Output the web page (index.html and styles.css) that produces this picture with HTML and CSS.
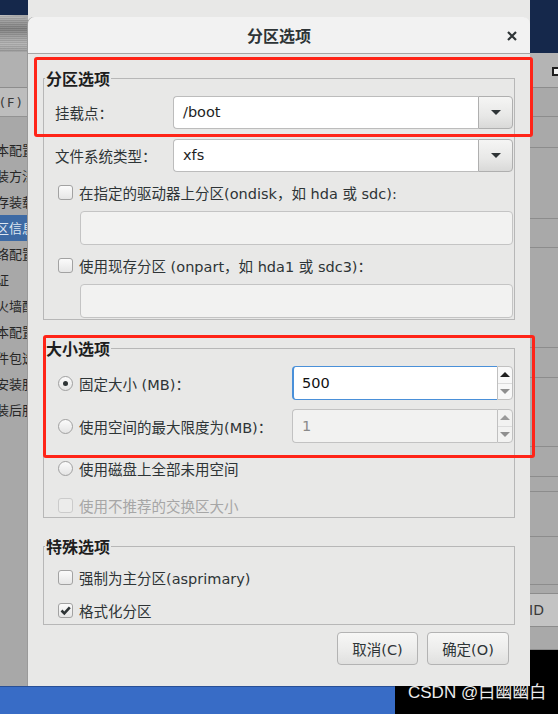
FILE: index.html
```html
<!DOCTYPE html>
<html lang="zh-CN">
<head>
<meta charset="utf-8">
<title>分区选项</title>
<link rel="stylesheet" href="styles.css">
</head>
<body>
<div class="desktop">
  <div class="bg-row">
    <div class="leftwin">
      <div class="navy-top"></div>
      <div class="disk"></div>
      <div class="toolbar"></div>
      <div class="menu">(F)</div>
      <div class="list">
        <div class="item">本配置</div>
        <div class="item">装方法</div>
        <div class="item">存装载</div>
        <div class="item sel">区信息</div>
        <div class="item">络配置</div>
        <div class="item">证</div>
        <div class="item">火墙配</div>
        <div class="item">本配置</div>
        <div class="item">件包选</div>
        <div class="item">安装服</div>
        <div class="item">装后服</div>
      </div>
    </div>
    <div class="mid"></div>
    <div class="rightwin">
      <div class="rw navy"></div>
      <div class="rw head" style="height:35px"><span class="sq"></span></div>
      <div class="rw" style="height:29px"></div>
      <div class="rw" style="height:31px"></div>
      <div class="rw" style="height:71px"></div>
      <div class="rw" style="height:29px"></div>
      <div class="rw" style="height:100px"></div>
      <div class="rw" style="height:30px"></div>
      <div class="rw" style="height:69px"></div>
      <div class="rw" style="height:30px"></div>
      <div class="rw" style="height:15px"></div>
      <div class="rw" style="height:45px"></div>
      <div class="rw" style="height:48px"></div>
      <div class="rw" style="height:9px"></div>
      <div class="rw idrow" style="height:33px">ID</div>
      <div class="rw" style="height:23px"></div>
      <div class="rw black" style="height:36px"></div>
    </div>
  </div>
  <div class="taskbar">
    <div class="tb-blue"></div>
    <div class="tb-black"></div>
  </div>

  <div class="watermark">CSDN @白幽幽白</div>

  <div class="dialog">
    <div class="titlebar">
      <span class="title">分区选项</span>
      <span class="close"><svg width="10" height="10" viewBox="0 0 10 10"><path d="M1 1 L9 9 M9 1 L1 9" stroke="#2e3436" stroke-width="2.2" fill="none"/></svg></span>
    </div>
    <div class="dbody">
      <fieldset class="frame f1">
        <legend>分区选项</legend>
        <div class="grid2">
          <span class="lbl">挂载点：</span>
          <div class="combo"><span class="cval">/boot</span><span class="drop"><i class="tri-down"></i></span></div>
          <span class="lbl">文件系统类型：</span>
          <div class="combo"><span class="cval">xfs</span><span class="drop"><i class="tri-down"></i></span></div>
        </div>
        <div class="row r-a"><span class="cb"></span><span>在指定的驱动器上分区(ondisk，如 hda 或 sdc):</span></div>
        <div class="entry"></div>
        <div class="row r-a"><span class="cb"></span><span>使用现存分区 (onpart，如 hda1 或 sdc3)：</span></div>
        <div class="entry"></div>
      </fieldset>

      <fieldset class="frame f2">
        <legend>大小选项</legend>
        <div class="srow">
          <span class="rd on"></span><span class="stext">固定大小 (MB)：</span>
          <div class="spin">
            <div class="spin-entry focus">500</div>
            <div class="spin-btns"><span><i class="tri-up"></i></span><span><i class="tri-down grey"></i></span></div>
          </div>
        </div>
        <div class="srow s2">
          <span class="rd"></span><span class="stext">使用空间的最大限度为(MB)：</span>
          <div class="spin dis">
            <div class="spin-entry">1</div>
            <div class="spin-btns"><span><i class="tri-up grey"></i></span><span><i class="tri-down grey"></i></span></div>
          </div>
        </div>
        <div class="row r-b"><span class="rd"></span><span>使用磁盘上全部未用空间</span></div>
        <div class="row r-b disabled"><span class="cb dis"></span><span>使用不推荐的交换区大小</span></div>
      </fieldset>

      <fieldset class="frame f3">
        <legend>特殊选项</legend>
        <div class="row"><span class="cb"></span><span>强制为主分区(asprimary)</span></div>
        <div class="row r-c"><span class="cb"><svg width="15" height="15" viewBox="0 0 15 15"><path d="M3.5 7.5 L6.3 10.3 L11.8 4.3" stroke="#2e3436" stroke-width="2.6" fill="none"/></svg></span><span>格式化分区</span></div>
      </fieldset>

      <div class="buttons">
        <button class="btn b1">取消(C)</button>
        <button class="btn b2">确定(O)</button>
      </div>
    </div>
    <div class="mark m1"></div>
    <div class="mark m2"></div>
  </div>
</div>
</body>
</html>
```

FILE: styles.css
```css
* { box-sizing: border-box; }
html, body { margin: 0; padding: 0; }
body {
  width: 558px;
  height: 714px;
  overflow: hidden;
  background: #15284b;
  font-family: "DejaVu Sans", "Noto Sans CJK SC", sans-serif;
  font-size: 14.5px;
  color: #2e3436;
}
.desktop {
  position: relative;
  width: 558px;
  height: 714px;
  display: flex;
  flex-direction: column;
}
.bg-row { height: 686px; display: flex; }

/* left background window */
.leftwin {
  width: 28px;
  display: flex;
  flex-direction: column;
  background: #a8a8a8;
  overflow: hidden;
}
.navy-top { height: 15px; background: #15284b; }
.disk {
  height: 37px;
  border-top-right-radius: 30px 6px;
  background:
    repeating-linear-gradient(180deg, rgba(255,255,255,0.08) 0 1px, rgba(0,0,0,0.07) 1px 2px),
    linear-gradient(180deg, #bdbdbd 0%, #9a9a9a 16%, #7e7e7e 38%, #9c9c9c 58%, #b2b2b2 78%, #9a9a9a 100%);
}
.toolbar { height: 36px; background: #b1b1b1; border-bottom: 1px solid #8d8d8d; }
.menu {
  height: 29px;
  background: #bdbdbd;
  border-bottom: 1px solid #929292;
  line-height: 30px;
  letter-spacing: 2px;
  font-size: 13px;
  color: #3a3a3a;
  white-space: nowrap;
}
.list { padding-top: 20px; }
.item {
  height: 26px;
  line-height: 26px;
  white-space: nowrap;
  margin-left: -4px;
  color: #262626;
  font-family: "Noto Sans CJK SC", sans-serif;
  font-size: 13px;
}
.item.sel { background: #3d6aa4; color: #dde6f1; }
.mid { flex: 1; background: #e8e8e7; }

/* right background window */
.rightwin { width: 28px; display: flex; flex-direction: column; background: #a9a9a9; }
.rw { border-bottom: 1px solid #8c8c8c; flex: none; }
.rw.navy { height: 53px; background: #15284b; border-bottom: 0; }
.rw.head { background: #b4b4b4; }
.sq {
  display: block;
  margin: 14px 0 0 22px;
  width: 9px;
  height: 9px;
  border: 2px solid #1e1e1e;
  background: #f2f2f2;
}
.rw.idrow {
  background: #c3c3c3;
  line-height: 32px;
  color: #3a3a3a;
  font-size: 14px;
  white-space: nowrap;
  margin-left: -1px;
}
.rw.black { background: #000; border-bottom: 0; }

/* taskbar */
.taskbar { height: 28px; display: flex; }
.tb-blue { width: 395px; background: #386cc6; border-top: 1px solid #284f96; }
.tb-black { flex: 1; background: #000; }
.watermark {
  position: absolute;
  left: 408px;
  top: 683px;
  color: #ececec;
  font-family: "Liberation Sans", "Noto Sans CJK SC", sans-serif;
  font-size: 17px;
  line-height: 20px;
  white-space: nowrap;
}

/* dialog */
.dialog {
  position: absolute;
  left: 28px;
  top: 17px;
  width: 502px;
  height: 669px;
  background: #e8e8e7;
  border-radius: 7px 7px 0 0;
  box-shadow: -1px 0 0 #9a9a9a;
}
.titlebar {
  position: relative;
  height: 37px;
  background: #f2f2f2;
  border-radius: 7px 7px 0 0;
  border-bottom: 1px solid #a6a6a6;
  display: flex;
  align-items: center;
  justify-content: center;
}
.title {
  font-family: "Noto Sans CJK SC", sans-serif;
  font-size: 16px;
  font-weight: bold;
  color: #2e3436;
  line-height: 20px;
}
.close {
  position: absolute;
  right: 13px;
  top: 14px;
  width: 10px;
  height: 10px;
  display: flex;
}
.dbody { padding: 15px 15px 21px 15px; }

.frame {
  margin: 0;
  border: 1px solid #b7b7b7;
  padding: 9px 1px 0 11px;
  min-width: 0;
}
.frame legend {
  font-family: "Noto Sans CJK SC", sans-serif;
  font-weight: bold;
  font-size: 16px;
  line-height: 18px;
  padding: 0 1px;
  margin-left: -10px;
  color: #1e1e1e;
}
.f1 { padding-bottom: 1px; }
.f2 { margin-top: 19px; }
.f3 { margin-top: 19px; padding-top: 10px; padding-bottom: 2px; }

.grid2 {
  display: grid;
  grid-template-columns: 118px 1fr;
  row-gap: 10px;
  align-items: center;
}
.lbl { line-height: 33px; font-family: "Noto Sans CJK SC", sans-serif; }
.combo { display: flex; height: 33px; }
.cval {
  flex: 1;
  background: #fff;
  border: 1px solid #bcbcbc;
  border-right: 0;
  border-radius: 4px 0 0 4px;
  padding-left: 9px;
  line-height: 31px;
  color: #1e1e1e;
}
.drop {
  width: 35px;
  border: 1px solid #afafaf;
  border-radius: 0 4px 4px 0;
  background: linear-gradient(180deg, #f5f5f4 0%, #e8e8e7 60%, #d9d9d8 100%);
  display: flex;
  align-items: center;
  justify-content: center;
}
.tri-down {
  display: block;
  width: 0; height: 0;
  border-left: 5px solid transparent;
  border-right: 5px solid transparent;
  border-top: 5px solid #2e3436;
}
.tri-up {
  display: block;
  width: 0; height: 0;
  border-left: 5px solid transparent;
  border-right: 5px solid transparent;
  border-bottom: 5px solid #1e1e1e;
}
.tri-down.grey { border-top-color: #8f8f8f; }
.tri-up.grey { border-bottom-color: #9a9a9a; }

.row {
  display: flex;
  align-items: center;
  height: 24px;
  gap: 6px;
  padding-left: 3px;
  white-space: nowrap;
}
.r-a { margin-top: 8px; }
.r-b { margin-top: 13px; }
.r-c { margin-top: 9px; }
.row.disabled { color: #a6a6a6; }

.cb {
  width: 15px;
  height: 15px;
  flex: none;
  border: 1px solid #a2a2a2;
  border-radius: 3px;
  background: linear-gradient(180deg, #fbfbfb, #e6e6e6);
  display: flex;
  align-items: center;
  justify-content: center;
}
.cb svg { display: block; margin: -1px; }
.cb.dis { border-color: #cbcbcb; background: #ececeb; }

.rd {
  width: 15px;
  height: 15px;
  flex: none;
  border: 1px solid #a0a0a0;
  border-radius: 50%;
  background: linear-gradient(180deg, #fbfbfb, #e4e4e4);
  display: flex;
  align-items: center;
  justify-content: center;
}
.rd.on::after {
  content: "";
  width: 5px;
  height: 5px;
  border-radius: 50%;
  background: #2e3436;
}

.entry {
  margin: 7px 0 0 25px;
  height: 34px;
  background: #f2f2f1;
  border: 1px solid #c4c4c4;
  border-radius: 4px;
}

.srow {
  display: flex;
  align-items: center;
  height: 34px;
  padding-left: 3px;
  white-space: nowrap;
}
.s2 { margin-top: 9px; }
.srow .rd { margin-right: 6px; }
.stext { width: 213px; }
.spin { display: flex; width: 221px; height: 34px; }
.spin-entry {
  flex: 1;
  background: #fff;
  border: 1px solid #c2c2c2;
  border-right: 0;
  border-radius: 4px 0 0 4px;
  padding-left: 9px;
  line-height: 32px;
  color: #111;
}
.spin-entry.focus {
  border: 1px solid #4a90d9;
  border-left-width: 2px;
  border-right: 0;
  padding-left: 8px;
}
.spin-btns {
  width: 16px;
  display: flex;
  flex-direction: column;
  border: 1px solid #c0c0c0;
  border-radius: 0 4px 4px 0;
  background: #f8f8f8;
}
.spin-btns span {
  flex: 1;
  display: flex;
  align-items: center;
  justify-content: center;
}
.spin-btns span + span { border-top: 1px solid #dcdcdc; }
.spin.dis .spin-entry { background: #f2f2f1; color: #8a8a8a; }
.spin.dis .spin-btns { background: #f2f2f1; }

.buttons {
  display: flex;
  justify-content: flex-end;
  gap: 9px;
  margin-top: 7px;
  padding-right: 6px;
}
.btn {
  height: 33px;
  border: 1px solid #b3b3b3;
  border-radius: 4px;
  background: linear-gradient(180deg, #f7f7f6 0%, #ececeb 55%, #e0e0df 100%);
  font-family: "DejaVu Sans", "Noto Sans CJK SC", sans-serif;
  font-size: 14.5px;
  color: #2e3436;
  padding: 0;
}
.b1 { width: 81px; }
.b2 { width: 82px; }

.mark {
  position: absolute;
  border: 3px solid #ff2418;
  border-radius: 3px;
}
.m1 { left: 6px; top: 40px; width: 499px; height: 80px; }
.m2 { left: 15px; top: 318px; width: 492px; height: 123px; }
```
